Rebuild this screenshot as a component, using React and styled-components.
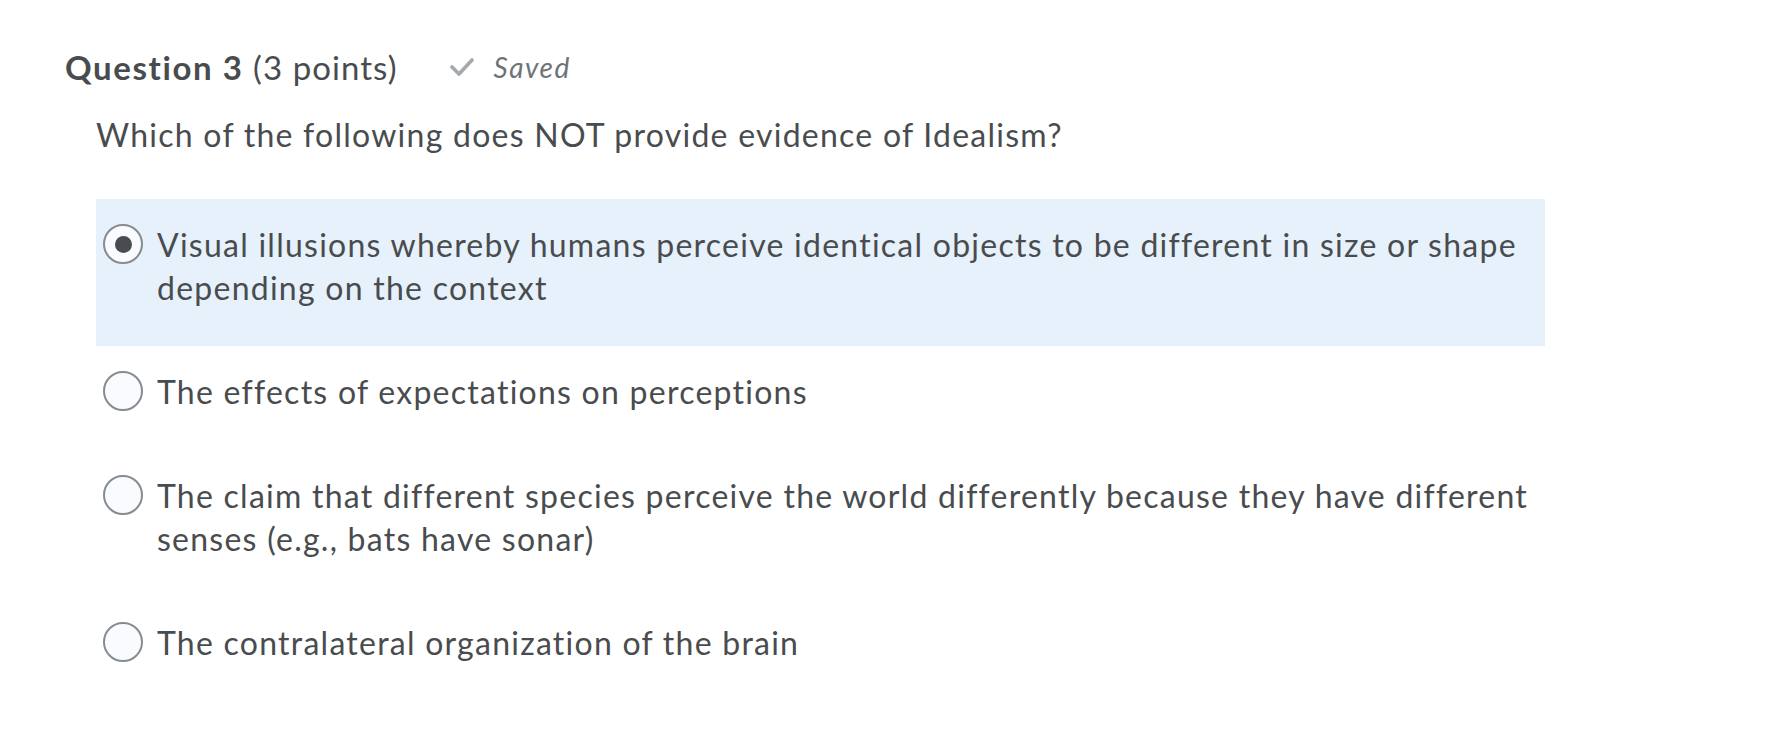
import React from "react";
import styled, { createGlobalStyle } from "styled-components";

const Global = createGlobalStyle`
  html, body { margin: 0; padding: 0; background: #ffffff; }
  body { font-family: Lato, "Open Sans", "Liberation Sans", sans-serif; color: #494c4e; }
`;

const Page = styled.div`
  padding: 46px 0 40px 65px;
  width: 1700px;
  box-sizing: border-box;
`;

const Header = styled.div`
  display: flex;
  align-items: center;
  height: 42px;
`;

const Title = styled.h2`
  margin: 0;
  font-size: 33px;
  line-height: 42px;
  font-weight: 400;
  letter-spacing: 1.05px;
  color: #494c4e;
  b { font-weight: 700; letter-spacing: 1.6px; }
`;

const SavedTag = styled.span`
  display: inline-flex;
  align-items: center;
  gap: 20px;
  margin-left: 52px;
  font-style: italic;
  font-size: 28px;
  letter-spacing: 1.5px;
  color: #6e7376;
`;

const Prompt = styled.p`
  margin: 25px 0 0 31px;
  font-size: 32px;
  line-height: 43px;
  letter-spacing: 1.25px;
`;

const Options = styled.div`
  margin: 43px 0 0 31px;
  width: 1449px;
  display: flex;
  flex-direction: column;
`;

const Option = styled.label`
  display: flex;
  align-items: flex-start;
  padding: 24px 4px 37px 7px;
  background: ${(p) => (p.$selected ? "#e6f1fb" : "transparent")};
  cursor: pointer;
`;

const Radio = styled.span`
  flex: none;
  width: 40px;
  height: 40px;
  margin-top: 1px;
  box-sizing: border-box;
  border-radius: 50%;
  border: 2px solid #868c8f;
  background: #f9fbff;
  display: flex;
  align-items: center;
  justify-content: center;
  &::after {
    content: "";
    width: 17px;
    height: 17px;
    border-radius: 50%;
    background: #494c4e;
    display: ${(p) => (p.$checked ? "block" : "none")};
  }
`;

const OptionText = styled.span`
  margin-left: 14px;
  font-size: 32px;
  line-height: 43px;
  letter-spacing: 1.25px;
  color: #494c4e;
`;

const CheckIcon = () => (
  <svg width="24" height="20" viewBox="0 0 24 20" fill="none">
    <polyline points="2,10 9,17 22,3" stroke="#a3a9ad" strokeWidth="3.6" strokeLinecap="round" strokeLinejoin="round" />
  </svg>
);

const options = [
  "Visual illusions whereby humans perceive identical objects to be different in size or shape depending on the context",
  "The effects of expectations on perceptions",
  "The claim that different species perceive the world differently because they have different senses (e.g., bats have sonar)",
  "The contralateral organization of the brain",
];

export default function App() {
  return (
    <Page>
      <Global />
      <Header>
        <Title>
          <b>Question 3</b> (3 points)
        </Title>
        <SavedTag>
          <CheckIcon />
          Saved
        </SavedTag>
      </Header>
      <Prompt>Which of the following does NOT provide evidence of Idealism?</Prompt>
      <Options>
        {options.map((o, i) => (
          <Option key={i} $selected={i === 0}>
            <Radio $checked={i === 0} />
            <OptionText>{o}</OptionText>
          </Option>
        ))}
      </Options>
    </Page>
  );
}
